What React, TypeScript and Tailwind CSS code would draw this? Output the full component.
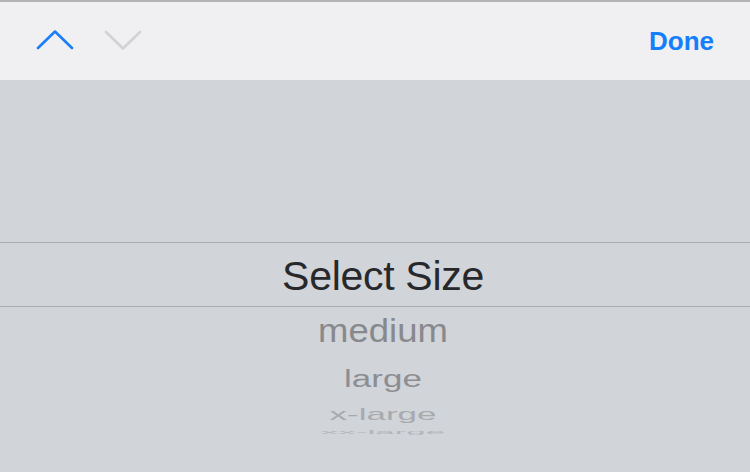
const items = [
  { label: "medium", h: "h-[46px]", size: "text-[36.5px]", scale: "scale-y-[0.93]", color: "text-[#88898d]" },
  { label: "large", h: "h-[48px]", size: "text-[35px]", scale: "scale-y-[0.66]", color: "text-[#8d8e92]" },
  { label: "x-large", h: "h-[24px]", size: "text-[35px]", scale: "scale-y-[0.45]", color: "text-[#a8aaae]" },
  { label: "xx-large", h: "h-[10px]", size: "text-[35px]", scale: "scale-y-[0.16]", color: "text-[#b4b6ba]" },
];

export default function App() {
  return (
    <div
      className="w-[750px] h-[472px] flex flex-col overflow-hidden bg-[#d1d4d9]"
      style={{ fontFamily: '"Liberation Sans", Arial, sans-serif' }}
    >
      {/* toolbar */}
      <div className="h-[80px] shrink-0 flex items-center justify-between pl-[36px] pr-[36px] bg-[#f0f0f2] border-t-2 border-[#b3b3b6]">
        <div className="flex items-center gap-[30px] -mt-[3px]">
          <svg width="38" height="20" viewBox="0 0 38 20" fill="none">
            <path d="M2 18 L19 1.5 L36 18" stroke="#1a7ef9" strokeWidth="2.6" strokeLinecap="round" strokeLinejoin="round" />
          </svg>
          <svg width="38" height="20" viewBox="0 0 38 20" fill="none">
            <path d="M2 2 L19 18.5 L36 2" stroke="#d2d2d6" strokeWidth="2.6" strokeLinecap="round" strokeLinejoin="round" />
          </svg>
        </div>
        <span className="text-[26px] font-bold text-[#157efb]">Done</span>
      </div>

      {/* picker */}
      <div className="flex-1 flex flex-col pt-[162px] pl-[16px]">
        <div className="h-[65px] shrink-0 -ml-[16px] flex items-center justify-center border-y border-[#a9abae]">
          <span className="ml-[16px] mt-[3px] text-[41px] text-[#27282b] tracking-[-0.3px] leading-none">Select Size</span>
        </div>
        {items.map((it) => (
          <div key={it.label} className={`${it.h} shrink-0 flex items-center justify-center`}>
            <span className={`leading-none mt-[2px] ${it.size} ${it.color} ${it.scale}`}>{it.label}</span>
          </div>
        ))}
      </div>
    </div>
  );
}
